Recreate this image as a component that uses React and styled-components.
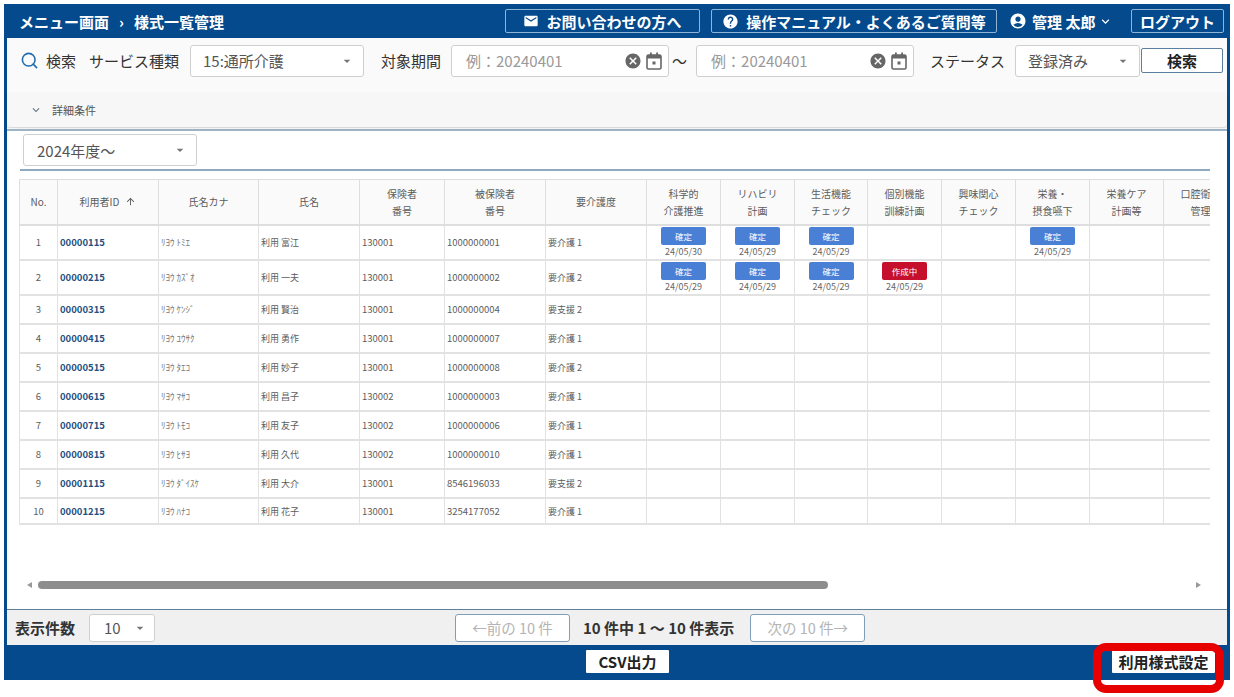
import styled, { createGlobalStyle } from 'styled-components';
import {
  MdAccountCircle,
  MdArrowDropDown,
  MdArrowUpward,
  MdCancel,
  MdEmail,
  MdHelp,
  MdKeyboardArrowDown,
} from 'react-icons/md';
import { FiSearch } from 'react-icons/fi';

const NAVY = '#044a8c';

const GlobalStyle = createGlobalStyle`
  html, body {
    margin: 0;
    height: 697px;
    background: #ffffff;
    font-family: "Noto Sans CJK JP", "Noto Sans", sans-serif;
  }
  #root {
    height: 697px;
    padding-top: 4px;
  }
  * {
    box-sizing: border-box;
  }
`;

const Frame = styled.div`
  width: 1226px;
  height: 676px;
  margin-left: 4px;
  display: flex;
  flex-direction: column;
  background: #ffffff;
  border-left: 3px solid ${NAVY};
  border-right: 3px solid ${NAVY};
`;

const TopBar = styled.header`
  height: 34px;
  flex: none;
  display: flex;
  align-items: center;
  margin: 0 -3px;
  padding: 0 6px 0 15px;
  background: ${NAVY};
  color: #ffffff;
`;

const Crumb = styled.div`
  font-size: 15px;
  font-weight: 700;
  margin-right: auto;
  white-space: nowrap;
`;

const CrumbSep = styled.span`
  margin: 0 10px;
`;

const TopButton = styled.div`
  height: 24px;
  width: ${(p) => p.$w}px;
  margin-left: ${(p) => p.$ml || 0}px;
  display: flex;
  align-items: center;
  justify-content: center;
  gap: 7px;
  border: 1px solid #8fb4d6;
  border-radius: 2px;
  font-size: 15px;
  font-weight: 700;
  white-space: nowrap;
`;

const UserMenu = styled.div`
  display: flex;
  align-items: center;
  gap: 5px;
  margin-left: 12px;
  width: 122px;
  font-size: 15px;
  font-weight: 700;
  white-space: nowrap;

  svg:last-child {
    margin-left: -2px;
  }
`;

const SearchBar = styled.div`
  height: 55px;
  flex: none;
  display: flex;
  align-items: center;
  padding: 0 0 10px 13px;
  background: #fafafa;
  color: #333333;
  font-size: 15px;
`;

const SearchLabel = styled.span`
  margin-left: ${(p) => p.$ml || 0}px;
  margin-right: ${(p) => p.$mr || 0}px;
  white-space: nowrap;
`;

const SelectBox = styled.div`
  width: ${(p) => p.$w}px;
  height: ${(p) => p.$h || 32}px;
  flex: none;
  display: flex;
  align-items: center;
  justify-content: space-between;
  padding: 0 ${(p) => p.$pr || 8}px 0 ${(p) => p.$pl || 12}px;
  background: #ffffff;
  border: 1px solid #cfcfcf;
  border-radius: 3px;
  color: #555555;
  font-size: 15px;
  font-weight: 400;
  white-space: nowrap;

  svg {
    color: #777777;
  }
`;

const PageSize = styled(SelectBox)`
  margin: 0 300px 0 14px;
`;

const DateInput = styled.div`
  width: 218px;
  height: 32px;
  flex: none;
  display: flex;
  align-items: center;
  gap: 3px;
  padding: 0 5px 0 14px;
  background: #ffffff;
  border: 1px solid #cfcfcf;
  border-radius: 3px;
  color: #999999;
  font-size: 15px;
  white-space: nowrap;

  svg {
    color: #666666;
  }
`;

const DatePlaceholder = styled.span`
  margin-right: auto;
`;

const SearchButton = styled.div`
  width: 82px;
  height: 25px;
  flex: none;
  margin-left: 1px;
  display: flex;
  align-items: center;
  justify-content: center;
  background: #ffffff;
  border: 1px solid #5a7f9f;
  border-radius: 2px;
  color: #222222;
  font-size: 15px;
  font-weight: 700;
`;

const DetailBar = styled.div`
  height: 34px;
  flex: none;
  display: flex;
  align-items: center;
  gap: 9px;
  padding-left: 22px;
  background: #f7f7f7;
  border-radius: 3px;
  box-shadow: 0 1px 2px rgba(0, 0, 0, 0.2);
  color: #555555;
  font-size: 11px;

  svg {
    color: #667788;
  }
`;

const Main = styled.main`
  flex: 1;
  min-height: 0;
  display: flex;
  flex-direction: column;
  margin-top: 2px;
  padding: 3px 17px 0 13px;
  border-top: 2px solid #9db3c6;
`;

const YearRow = styled.div`
  padding: 0 0 3px 3px;
  border-bottom: 2px solid #8fa9bf;
`;

const TableWrap = styled.div`
  margin: 8px 0 0 -1px;
  overflow: hidden;
`;

const Table = styled.table`
  width: 1218px;
  table-layout: fixed;
  border-collapse: collapse;
  color: #5c5c5c;
  font-size: 9.5px;
`;

const Th = styled.th`
  height: 45px;
  padding: 0;
  background: #fafafa;
  border: 1px solid #dedede;
  border-bottom-width: 2px;
  font-weight: 400;
  font-size: 10px;
  line-height: 17px;
  text-align: center;
  white-space: pre-line;
`;

const SortIcon = styled(MdArrowUpward)`
  margin-left: 6px;
  vertical-align: -1px;
`;

const Td = styled.td`
  padding: 0 0 0 ${(p) => (p.$center ? 0 : 2)}px;
  border: 1px solid #e2e2e2;
  border-bottom-width: 2px;
  text-align: ${(p) => (p.$center ? 'center' : 'left')};
  white-space: nowrap;
  vertical-align: middle;
`;

const Row = styled.tr`
  height: ${(p) => p.$h}px;
`;

const UserLink = styled.span`
  color: #24507f;
  font-weight: 700;
`;

const Kana = styled.span`
  font-size: 9px;
  color: #777777;
`;

const JpCell = styled.span`
  font-size: 9px;
`;

const Badge = styled.div`
  width: 45px;
  height: 18px;
  margin: 0 auto;
  display: flex;
  align-items: center;
  justify-content: center;
  background: ${(p) => (p.$red ? '#c60f2c' : '#4a7fd6')};
  border-radius: 2px;
  color: #ffffff;
  font-size: 8.5px;
`;

const BadgeDate = styled.div`
  font-size: 9px;
  line-height: 12px;
  color: #666666;
  margin-top: 1px;
`;

const ScrollTrack = styled.div`
  display: flex;
  align-items: center;
  margin-top: auto;
  height: 8px;
  margin-bottom: 20px;
  padding-left: 7px;
`;

const ScrollArrow = styled.span`
  width: 0;
  height: 0;
  border-top: 3px solid transparent;
  border-bottom: 3px solid transparent;
  border-${(p) => (p.$left ? 'right' : 'left')}: 5px solid #999999;
`;

const ScrollThumb = styled.div`
  width: 790px;
  height: 8px;
  margin: 0 368px 0 6px;
  background: #8e8e8e;
  border-radius: 4px;
`;

const Pager = styled.div`
  height: 36px;
  flex: none;
  display: flex;
  align-items: center;
  padding-left: 8px;
  background: #f0f0f0;
  border-top: 1px solid #5e8099;
  color: #333333;
  font-size: 15px;
  font-weight: 700;
`;

const PagerButton = styled.div`
  width: 115px;
  height: 28px;
  flex: none;
  display: flex;
  align-items: center;
  justify-content: center;
  background: #ffffff;
  border: 1px solid #7f9fb8;
  border-radius: 3px;
  color: #b4b4b4;
  font-size: 14.5px;
  font-weight: 400;
`;

const PagerText = styled.span`
  margin: 0 16px 0 13px;
  white-space: nowrap;
`;

const BottomBar = styled.footer`
  height: 35px;
  flex: none;
  display: flex;
  align-items: center;
  justify-content: space-between;
  margin: 0 -3px;
  padding: 0 15px 3px 582px;
  background: ${NAVY};
`;

const FooterButton = styled.div`
  position: relative;
  width: ${(p) => p.$w}px;
  height: 23px;
  display: flex;
  align-items: center;
  justify-content: center;
  background: #ffffff;
  border-radius: 1px;
  color: #222222;
  font-size: 15px;
  font-weight: 700;
  white-space: nowrap;
`;

const Highlight = styled.div`
  position: absolute;
  left: -19px;
  right: -9px;
  top: -7px;
  bottom: -20px;
  border: 8px solid #e60000;
  border-radius: 13px;
`;

const serviceCols = [
  '科学的\n介護推進',
  'リハビリ\n計画',
  '生活機能\nチェック',
  '個別機能\n訓練計画',
  '興味関心\nチェック',
  '栄養・\n摂食嚥下',
  '栄養ケア\n計画等',
  '口腔衛生\n管理',
];

const colWidths = [38, 101, 100, 101, 85, 101, 101, 74, 74, 73, 74, 74, 74, 74, 74];

const users = [
  { no: 1, id: '00000115', kana: 'ﾘﾖｳ ﾄﾐｴ', name: '利用 富江', ins: '130001', num: '1000000001', care: '要介護 1', h: 35, marks: { 0: ['確定', '24/05/30'], 1: ['確定', '24/05/29'], 2: ['確定', '24/05/29'], 5: ['確定', '24/05/29'] } },
  { no: 2, id: '00000215', kana: 'ﾘﾖｳ ｶｽﾞｵ', name: '利用 一夫', ins: '130001', num: '1000000002', care: '要介護 2', h: 35, marks: { 0: ['確定', '24/05/29'], 1: ['確定', '24/05/29'], 2: ['確定', '24/05/29'], 3: ['作成中', '24/05/29'] } },
  { no: 3, id: '00000315', kana: 'ﾘﾖｳ ｹﾝｼﾞ', name: '利用 賢治', ins: '130001', num: '1000000004', care: '要支援 2', h: 29 },
  { no: 4, id: '00000415', kana: 'ﾘﾖｳ ﾕｳｻｸ', name: '利用 勇作', ins: '130001', num: '1000000007', care: '要介護 1', h: 29 },
  { no: 5, id: '00000515', kana: 'ﾘﾖｳ ﾀｴｺ', name: '利用 妙子', ins: '130001', num: '1000000008', care: '要介護 2', h: 29 },
  { no: 6, id: '00000615', kana: 'ﾘﾖｳ ﾏｻｺ', name: '利用 昌子', ins: '130002', num: '1000000003', care: '要介護 1', h: 29 },
  { no: 7, id: '00000715', kana: 'ﾘﾖｳ ﾄﾓｺ', name: '利用 友子', ins: '130002', num: '1000000006', care: '要介護 1', h: 29 },
  { no: 8, id: '00000815', kana: 'ﾘﾖｳ ﾋｻﾖ', name: '利用 久代', ins: '130002', num: '1000000010', care: '要介護 1', h: 29 },
  { no: 9, id: '00001115', kana: 'ﾘﾖｳ ﾀﾞｲｽｹ', name: '利用 大介', ins: '130001', num: '8546196033', care: '要支援 2', h: 29 },
  { no: 10, id: '00001215', kana: 'ﾘﾖｳ ﾊﾅｺ', name: '利用 花子', ins: '130001', num: '3254177052', care: '要介護 1', h: 26 },
];

// outlined calendar with a small square in the middle
function CalendarIcon() {
  return (
    <svg width="18" height="20" viewBox="0 0 18 20" fill="none">
      <rect x="2" y="4" width="14" height="14" rx="1.5" stroke="currentColor" strokeWidth="1.6" />
      <rect x="2" y="4" width="14" height="3.5" fill="currentColor" />
      <rect x="5" y="1.5" width="1.8" height="3" fill="currentColor" />
      <rect x="11.2" y="1.5" width="1.8" height="3" fill="currentColor" />
      <rect x="7.5" y="10.5" width="3" height="3" fill="currentColor" />
    </svg>
  );
}

function DateField() {
  return (
    <DateInput>
      <DatePlaceholder>例：20240401</DatePlaceholder>
      <MdCancel size={18} />
      <CalendarIcon />
    </DateInput>
  );
}

export default function App() {
  return (
    <>
      <GlobalStyle />
      <Frame>
        <TopBar>
          <Crumb>
            メニュー画面<CrumbSep>›</CrumbSep>様式一覧管理
          </Crumb>
          <TopButton $w={195}>
            <MdEmail size={16} />
            お問い合わせの方へ
          </TopButton>
          <TopButton $w={286} $ml={11}>
            <MdHelp size={17} />
            操作マニュアル・よくあるご質問等
          </TopButton>
          <UserMenu>
            <MdAccountCircle size={18} />
            管理 太郎
            <MdKeyboardArrowDown size={15} />
          </UserMenu>
          <TopButton $w={93}>ログアウト</TopButton>
        </TopBar>

        <SearchBar>
          <FiSearch size={19} color="#1f6cb0" />
          <SearchLabel $ml={7}>検索</SearchLabel>
          <SearchLabel $ml={13} $mr={11}>サービス種類</SearchLabel>
          <SelectBox $w={174}>
            15:通所介護
            <MdArrowDropDown size={16} />
          </SelectBox>
          <SearchLabel $ml={17} $mr={10}>対象期間</SearchLabel>
          <DateField />
          <SearchLabel $ml={3} $mr={9}>～</SearchLabel>
          <DateField />
          <SearchLabel $ml={16} $mr={10}>ステータス</SearchLabel>
          <SelectBox $w={125}>
            登録済み
            <MdArrowDropDown size={16} />
          </SelectBox>
          <SearchButton>検索</SearchButton>
        </SearchBar>

        <DetailBar>
          <MdKeyboardArrowDown size={14} />
          詳細条件
        </DetailBar>

        <Main>
          <YearRow>
            <SelectBox $w={174} $pl={13}>
              2024年度～
              <MdArrowDropDown size={16} />
            </SelectBox>
          </YearRow>

          <TableWrap>
            <Table>
              <colgroup>
                {colWidths.map((w, i) => (
                  <col key={i} width={w} />
                ))}
              </colgroup>
              <thead>
                <tr>
                  <Th>No.</Th>
                  <Th>
                    利用者ID
                    <SortIcon size={11} />
                  </Th>
                  <Th>氏名カナ</Th>
                  <Th>氏名</Th>
                  <Th>{'保険者\n番号'}</Th>
                  <Th>{'被保険者\n番号'}</Th>
                  <Th>要介護度</Th>
                  {serviceCols.map((label) => (
                    <Th key={label}>{label}</Th>
                  ))}
                </tr>
              </thead>
              <tbody>
                {users.map((u) => (
                  <Row key={u.no} $h={u.h}>
                    <Td $center>{u.no}</Td>
                    <Td>
                      <UserLink>{u.id}</UserLink>
                    </Td>
                    <Td>
                      <Kana>{u.kana}</Kana>
                    </Td>
                    <Td>
                      <JpCell>{u.name}</JpCell>
                    </Td>
                    <Td>{u.ins}</Td>
                    <Td>{u.num}</Td>
                    <Td>
                      <JpCell>{u.care}</JpCell>
                    </Td>
                    {serviceCols.map((label, i) => {
                      const mark = u.marks && u.marks[i];
                      return (
                        <Td key={label} $center>
                          {mark && (
                            <>
                              <Badge $red={mark[0] === '作成中'}>{mark[0]}</Badge>
                              <BadgeDate>{mark[1]}</BadgeDate>
                            </>
                          )}
                        </Td>
                      );
                    })}
                  </Row>
                ))}
              </tbody>
            </Table>
          </TableWrap>

          <ScrollTrack>
            <ScrollArrow $left />
            <ScrollThumb />
            <ScrollArrow />
          </ScrollTrack>
        </Main>

        <Pager>
          <span>表示件数</span>
          <PageSize $w={66} $h={28} $pl={14} $pr={6}>
            10
            <MdArrowDropDown size={16} />
          </PageSize>
          <PagerButton>←前の 10 件</PagerButton>
          <PagerText>10 件中 1 ～ 10 件表示</PagerText>
          <PagerButton>次の 10 件→</PagerButton>
        </Pager>

        <BottomBar>
          <FooterButton $w={83}>CSV出力</FooterButton>
          <FooterButton $w={103}>
            利用様式設定
            <Highlight />
          </FooterButton>
        </BottomBar>
      </Frame>
    </>
  );
}
